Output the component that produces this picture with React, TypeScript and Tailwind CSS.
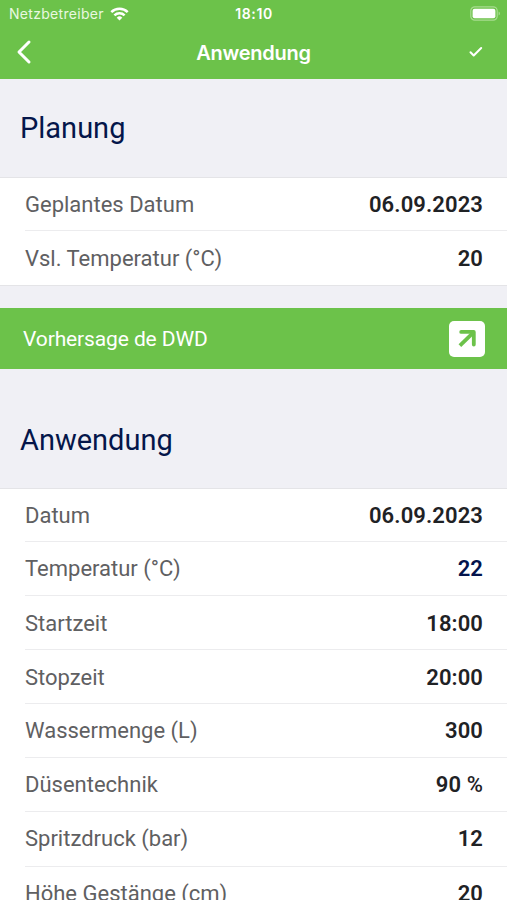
type RowProps = {
  label: string;
  value: string;
  unit?: string;
  size?: string;
  valueColor?: string;
  last?: boolean;
};

const planning: RowProps[] = [
  { label: "Geplantes Datum", value: "06.09.2023", size: "h-[53px] pt-px" },
  { label: "Vsl. Temperatur (°C)", value: "20", last: true },
];

const application: RowProps[] = [
  { label: "Datum", value: "06.09.2023", size: "h-[53px] pt-px" },
  { label: "Temperatur (°C)", value: "22", valueColor: "text-[#04144c]" },
  { label: "Startzeit", value: "18:00", size: "h-[54px] pt-[3px]" },
  { label: "Stopzeit", value: "20:00", size: "h-[54px] pt-[3px]" },
  { label: "Wassermenge (L)", value: "300" },
  { label: "Düsentechnik", value: "90", unit: "%" },
  { label: "Spritzdruck (bar)", value: "12", size: "h-[55px] pb-px" },
  { label: "Höhe Gestänge (cm)", value: "20", size: "h-[54px] pb-px", last: true },
];

const Row = ({ label, value, unit, size = "h-[54px] pt-px", valueColor = "text-[#1f2225]", last }: RowProps) => (
  <div className={`ml-[25px] pr-6 flex items-center justify-between text-[22px] leading-none ${size} ${last ? "" : "border-b border-[#ececee]"}`}>
    <span className="text-[#5f6062]">{label}</span>
    <span className={`font-semibold tracking-[0.1px] ${valueColor}`}>
      {value}
      {unit && <span className="font-medium"> {unit}</span>}
    </span>
  </div>
);

const StatusBar = () => (
  <div className="grid grid-cols-3 items-center h-[27px] pl-[9px] pr-[6px]">
    <div className="flex items-center gap-[6px]">
      <span className="text-[14px] tracking-[0.3px] text-[#e9f8e0]">Netzbetreiber</span>
      <svg width="19" height="14" viewBox="0 0 19 14" fill="none" stroke="white" strokeWidth="2.5">
        <path d="M1.3 5.2a11.6 11.6 0 0 1 16.4 0" />
        <path d="M4.4 8.4a7.2 7.2 0 0 1 10.2 0" />
        <path d="M9.5 13.5 6.7 10.7a4 4 0 0 1 5.6 0Z" fill="white" stroke="none" />
      </svg>
    </div>
    <span className="pr-[2px] text-center text-[14px] font-semibold tracking-[0.6px]">18:10</span>
    <svg className="justify-self-end" width="31" height="15" viewBox="0 0 31 15">
      <rect x="0.8" y="0.8" width="26.4" height="13.4" rx="4" fill="none" stroke="#a8dc90" strokeWidth="1.2" />
      <rect x="2.6" y="2.8" width="22.8" height="9.4" rx="2" fill="white" />
      <path d="M28.6 5.5c1.8.6 1.8 3.4 0 4Z" fill="#a8dc90" />
    </svg>
  </div>
);

export default function App() {
  return (
    <div className="w-full h-[900px] overflow-hidden bg-[#f0f0f5] font-[Roboto,sans-serif]">
      <header className="h-[79px] bg-[#6cc24a] text-white font-[Inter,sans-serif]">
        <StatusBar />
        <div className="grid grid-cols-[1fr_auto_1fr] items-center h-[50px] pl-[16px] pr-[16px]">
          <svg width="16" height="26" viewBox="0 0 16 26" fill="none" stroke="white" strokeWidth="3" strokeLinecap="round" strokeLinejoin="round">
            <path d="M13 3 3 13l10 10" />
          </svg>
          <h1 className="pt-px text-[20px] font-semibold tracking-[-0.25px]">Anwendung</h1>
          <svg className="mr-[7px] justify-self-end" width="16" height="12" viewBox="0 0 16 12" fill="none" stroke="white" strokeWidth="2" strokeLinecap="round" strokeLinejoin="round">
            <path d="m2.5 6.2 3.2 3.3L13.2 2" />
          </svg>
        </div>
      </header>

      <h2 className="h-[98px] pl-5 pt-[2px] flex items-center text-[29px] text-[#04164a]">Planung</h2>
      <section className="border-y border-[#e4e4e7] bg-white">
        {planning.map((row) => (
          <Row key={row.label} {...row} />
        ))}
      </section>

      <button className="mt-[22px] w-full h-[61px] pl-[23px] pr-[22px] flex items-center justify-between bg-[#6cc24a] text-white text-[21px]">
        <span className="pt-[2px] tracking-[-0.12px]">Vorhersage de DWD</span>
        <span className="size-9 rounded-[5px] bg-white flex items-center justify-center">
          <svg width="20" height="20" viewBox="0 0 20 20" fill="none" stroke="#6cc24a" strokeWidth="3.8" strokeLinecap="round" strokeLinejoin="round">
            <path d="M4.2 2.9h12.6v12.6" />
            <path d="M16 3.8 2.9 16.6" strokeLinecap="butt" />
          </svg>
        </span>
      </button>

      <h2 className="mt-[22px] h-[97px] pl-5 pt-[2px] flex items-center text-[29px] text-[#04164a]">Anwendung</h2>
      <section className="border-t border-[#e4e4e7] bg-white">
        {application.map((row) => (
          <Row key={row.label} {...row} />
        ))}
      </section>
    </div>
  );
}
